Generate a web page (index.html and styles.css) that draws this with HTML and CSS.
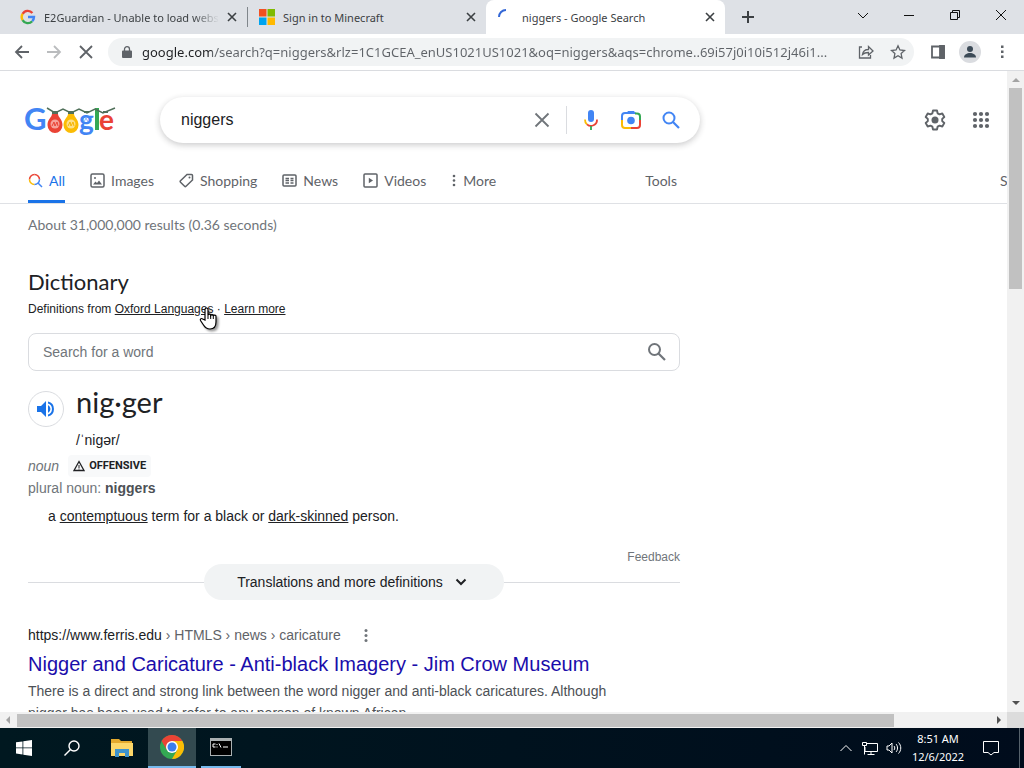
FILE: index.html
```html
<!DOCTYPE html>
<html lang="en">
<head>
  <meta charset="UTF-8">
  <meta name="viewport" content="width=device-width, initial-scale=1.0">
  <title>niggers - Google Search</title>
  <link rel="stylesheet" href="styles.css">
</head>
<body>
  <!-- Browser tabs -->
  <div class="tab-strip">
    <div class="tab">
      <svg class="favicon" viewBox="0 0 16 16" fill="none" stroke-width="2.4">
        <path d="M2.6 4.9A6 6 0 0 1 12.4 4" stroke="#ea4335"/>
        <path d="M2.6 11.1a6 6 0 0 1 0-6.2" stroke="#fbbc05"/>
        <path d="M12.2 12.2a6 6 0 0 1-9.6-1.1" stroke="#34a853"/>
        <path d="M8 8h6a6 6 0 0 1-1.8 4.2" stroke="#4285f4"/>
      </svg>
      <span class="tab-title faded">E2Guardian - Unable to load website</span>
      <button class="tab-close" aria-label="Close tab"><svg viewBox="0 0 10 10"><path d="M1 1l8 8M9 1l-8 8"/></svg></button>
    </div>
    <div class="tab divided">
      <svg class="favicon" viewBox="0 0 16 16">
        <path d="M0 0h7.5v7.5H0z" fill="#f25022"/>
        <path d="M8.5 0H16v7.5H8.5z" fill="#7fba00"/>
        <path d="M0 8.5h7.5V16H0z" fill="#00a4ef"/>
        <path d="M8.5 8.5H16V16H8.5z" fill="#ffb900"/>
      </svg>
      <span class="tab-title">Sign in to Minecraft</span>
      <button class="tab-close" aria-label="Close tab"><svg viewBox="0 0 10 10"><path d="M1 1l8 8M9 1l-8 8"/></svg></button>
    </div>
    <div class="tab active">
      <svg class="favicon" viewBox="0 0 16 16"><path d="M1 8a7 7 0 0 1 7-7" fill="none" stroke="#3367d6" stroke-width="2"/></svg>
      <span class="tab-title">niggers - Google Search</span>
      <button class="tab-close" aria-label="Close tab"><svg viewBox="0 0 10 10"><path d="M1 1l8 8M9 1l-8 8"/></svg></button>
    </div>
    <button class="new-tab" aria-label="New tab"><svg viewBox="0 0 12 12"><path d="M6 0v12M0 6h12"/></svg></button>
    <div class="window-buttons">
      <button aria-label="Search tabs"><svg viewBox="0 0 12 12"><path d="M1 4l5 5 5-5"/></svg></button>
      <button aria-label="Minimize"><svg viewBox="0 0 12 12"><path d="M1 6.5h10"/></svg></button>
      <button aria-label="Restore"><svg viewBox="0 0 12 12"><path d="M1.5 3.5h7v7h-7zM3.5 3.5v-2h7v7h-2"/></svg></button>
      <button aria-label="Close"><svg viewBox="0 0 12 12"><path d="M1 1l10 10M11 1L1 11"/></svg></button>
    </div>
  </div>

  <!-- Toolbar with address bar -->
  <div class="toolbar">
    <button class="tool" aria-label="Back"><svg viewBox="0 0 16 16"><path d="M15 8H2M8 2L2 8l6 6"/></svg></button>
    <button class="tool disabled" aria-label="Forward"><svg viewBox="0 0 16 16"><path d="M1 8h13M8 2l6 6-6 6"/></svg></button>
    <button class="tool" aria-label="Stop"><svg viewBox="0 0 16 16"><path d="M2 2l12 12M14 2L2 14"/></svg></button>
    <div class="address-bar">
      <svg class="lock" viewBox="0 0 10 12"><path d="M1 4.5h8a1 1 0 0 1 1 1V11a1 1 0 0 1-1 1H1a1 1 0 0 1-1-1V5.500a1 1 0 0 1 1-1z" fill="#5f6368"/><path d="M2.500 5V3.200a2.500 2.500 0 0 1 5 0V5" fill="none" stroke="#5f6368" stroke-width="1.300"/></svg>
      <input class="url" type="text" aria-label="Address" value="google.com/search?q=niggers&amp;rlz=1C1GCEA_enUS1021US1021&amp;oq=niggers&amp;aqs=chrome..69i57j0i10i512j46i1...">
      <button class="tool thin" aria-label="Share"><svg viewBox="0 0 16 16"><path d="M4 3H1.500v11h11v-3M4.500 10.500c.5-3.500 2.500-5 6-5V2.500L15 7l-4.500 4V8.500c-2.500 0-4.500.5-6 2z"/></svg></button>
      <button class="tool thin" aria-label="Bookmark"><svg viewBox="0 0 16 16"><path d="M8 1.800l1.900 4.200 4.600.5-3.400 3.100.9 4.500L8 11.800l-4 2.300.9-4.500L1.500 6.500l4.600-.5z"/></svg></button>
    </div>
    <button class="tool" aria-label="Side panel"><svg viewBox="0 0 16 16"><path d="M2 2.500h12v11H2z"/><path d="M10 2h4v12h-4z" fill="#5f6368"/></svg></button>
    <button class="tool avatar" aria-label="Profile"><svg viewBox="0 0 22 22"><circle cx="11" cy="11" r="11" fill="#dadce0" stroke="none"/><circle cx="11" cy="8" r="3" fill="#3c4a57" stroke="none"/><path d="M5 16.500c0-3 3-4.500 6-4.500s6 1.500 6 4.500z" fill="#3c4a57" stroke="none"/></svg></button>
    <button class="tool menu" aria-label="Menu"><svg viewBox="0 0 16 16"><path d="M7 1.500h2.500V4H7zM7 6.500h2.500V9H7zM7 11.500h2.500V14H7z" fill="#5f6368" stroke="none"/></svg></button>
  </div>

  <!-- Page viewport -->
  <div class="viewport">
    <main class="page">
      <header class="search-header">
        <a class="logo" href="#" aria-label="Google">
          <svg viewBox="0 0 92 34">
            <text x="0" y="27" font-size="31" fill="#4285f4">G</text>
            <text x="55" y="27" font-size="28" fill="#4285f4">g</text>
            <path d="M71 5h4v22h-4z" fill="#34a853"/>
            <text x="75" y="27" font-size="28" fill="#ea4335">e</text>
            <path d="M23 5l8 5 8-4 8 4 8-4 8 4 8-4 8 4 12-5" fill="none" stroke="#50705a" stroke-width="1.500"/>
            <path d="M28 11h6c0 3 4.500 5 4.500 11a7.500 8 0 0 1-15 0c0-6 4.500-8 4.500-11z" fill="#ea4335"/>
            <path d="M44 11h6c0 3 4.500 5 4.500 11a7.500 8 0 0 1-15 0c0-6 4.500-8 4.500-11z" fill="#fbbc05"/>
            <path d="M28 8h6v3h-6zM44 8h6v3h-6zM60 8h5v2h-5zM79 8h5v2h-5z" fill="#50705a"/>
            <circle cx="31" cy="21" r="4.500" fill="#f6a39b"/><path d="M28 23l2-4 1 4 2-4 1 4" fill="none" stroke="#ea4335"/>
            <circle cx="47" cy="21" r="4.500" fill="#fde08a"/><path d="M44 23l2-4 1 4 2-4 1 4" fill="none" stroke="#f5b400"/>
            <path d="M60 19l2-4 2 4" fill="none" stroke="#8ab4f8"/>
          </svg>
        </a>
        <form class="search-box">
          <input type="text" aria-label="Search" value="niggers">
          <button type="button" class="clear" aria-label="Clear"><svg viewBox="0 0 16 16"><path d="M1.500 1.500l13 13M14.500 1.500l-13 13" stroke="#70757a" stroke-width="1.800"/></svg></button>
          <button type="button" aria-label="Search by voice"><svg viewBox="0 0 20 20">
            <rect x="7" y="0" width="6" height="12" rx="3" fill="#4285f4"/>
            <path d="M4 9.500a6 6 0 0 0 2 4.800" fill="none" stroke="#fbbc05" stroke-width="1.800"/>
            <path d="M6 14.300a6 6 0 0 0 10-4.800" fill="none" stroke="#ea4335" stroke-width="1.800"/>
            <path d="M10 16v4" stroke="#34a853" stroke-width="1.800"/>
          </svg></button>
          <button type="button" aria-label="Search by image"><svg viewBox="0 0 20 20" fill="none" stroke-width="2">
            <path d="M1 10V6a3 3 0 0 1 3-3h3" stroke="#4285f4"/>
            <path d="M5 3.500l2-2h6l2 2z" fill="#4285f4" stroke="#4285f4" stroke-width="1"/>
            <path d="M14 3.500h2a3 3 0 0 1 3 3V10" stroke="#34a853"/>
            <path d="M19 10v5a3 3 0 0 1-3 3h-6" stroke="#ea4335"/>
            <path d="M10 18H4a3 3 0 0 1-3-3v-5" stroke="#fbbc05"/>
            <circle cx="10" cy="10.500" r="3.800" fill="#4285f4"/>
          </svg></button>
          <button type="button" aria-label="Google Search"><svg viewBox="0 0 20 20"><circle cx="8" cy="8" r="5.500" fill="none" stroke="#4285f4" stroke-width="2"/><path d="M12 12l6 6" stroke="#4285f4" stroke-width="2.200"/></svg></button>
        </form>
        <div class="header-actions">
          <button aria-label="Settings"><svg viewBox="0 0 22 22"><path d="M9 1.500h4l.6 2.800 2 1.100 2.700-.9 2 3.500-2.100 1.900v2.200l2.100 1.900-2 3.500-2.700-.9-2 1.100-.6 2.800H9l-.6-2.800-2-1.100-2.700.9-2-3.500 2.100-1.900V9.900L1.700 8l2-3.500 2.700.9 2-1.100z" fill="none" stroke="#5f6368" stroke-width="1.900" stroke-linejoin="round"/><circle cx="11" cy="11" r="3.500" fill="#5f6368"/></svg></button>
          <button aria-label="Google apps"><svg viewBox="0 0 22 22" fill="#5f6368"><circle cx="5" cy="5" r="2.100"/><circle cx="11" cy="5" r="2.100"/><circle cx="17" cy="5" r="2.100"/><circle cx="5" cy="11" r="2.100"/><circle cx="11" cy="11" r="2.100"/><circle cx="17" cy="11" r="2.100"/><circle cx="5" cy="17" r="2.100"/><circle cx="11" cy="17" r="2.100"/><circle cx="17" cy="17" r="2.100"/></svg></button>
        </div>
      </header>

      <nav class="search-nav">
        <a class="active" href="#"><svg viewBox="0 0 15 15" fill="none" stroke-width="1.500"><path d="M1.500 6.500A5 5 0 0 1 6.500 1.500" stroke="#ea4335"/><path d="M6.500 1.500A5 5 0 0 1 11.500 6.500" stroke="#ea4335"/><path d="M1.500 6.500A5 5 0 0 0 6.500 11.500" stroke="#fbbc05"/><path d="M6.500 11.500A5 5 0 0 0 11.500 6.500M10 10L14 14" stroke="#4285f4"/></svg>All</a>
        <a href="#"><svg viewBox="0 0 15 15" fill="none" stroke="#5f6368" stroke-width="1.500"><rect x="1" y="1" width="13" height="13" rx="1.500"/><path d="M3 11.500h9l-3-4-2 2.500-1.500-1.500z" fill="#5f6368" stroke="none"/><circle cx="5" cy="5" r="1" fill="#5f6368" stroke="none"/></svg>Images</a>
        <a href="#"><svg viewBox="0 0 15 15" fill="none" stroke="#5f6368" stroke-width="1.500"><path d="M8 1.500h4.500a1 1 0 0 1 1 1V7L7 13.300a1 1 0 0 1-1.400 0L1.500 9.200a1 1 0 0 1 0-1.400z"/><circle cx="10.500" cy="4.500" r="1" fill="#5f6368" stroke="none"/></svg>Shopping</a>
        <a href="#"><svg viewBox="0 0 15 15" fill="none" stroke="#5f6368" stroke-width="1.500"><rect x="1" y="2" width="13" height="11" rx="1"/><path d="M3.500 5.500h3.500M3.500 7.500h3.500M3.500 10h3.500M8.500 5.500h3M8.500 7.500h3M8.500 10h3"/></svg>News</a>
        <a href="#"><svg viewBox="0 0 15 15" fill="none" stroke="#5f6368" stroke-width="1.500"><rect x="1" y="1" width="13" height="13" rx="1"/><path d="M5.800 4.800v5.400L10 7.500z" fill="#5f6368" stroke="none"/></svg>Videos</a>
        <button class="more"><svg viewBox="0 0 6 15" fill="#5f6368"><circle cx="3" cy="3" r="1.300"/><circle cx="3" cy="7.500" r="1.300"/><circle cx="3" cy="12" r="1.300"/></svg>More</button>
        <button class="tools">Tools</button>
        <button class="safe-search">SafeSearch</button>
      </nav>

      <section class="results">
        <p class="stats">About 31,000,000 results (0.36 seconds)</p>

        <!-- Dictionary card -->
        <h2>Dictionary</h2>
        <p class="source">Definitions from <a href="#">Oxford Languages</a> · <a href="#">Learn more</a></p>
        <form class="word-search">
          <input type="text" aria-label="Search for a word" placeholder="Search for a word">
          <button type="button" aria-label="Look up"><svg viewBox="0 0 20 20"><circle cx="7.500" cy="7.500" r="5.500" fill="none" stroke="#70757a" stroke-width="2"/><path d="M11.500 11.500l6.500 6.500" stroke="#70757a" stroke-width="2.200"/></svg></button>
        </form>
        <div class="headword">
          <button class="speak" aria-label="Listen"><svg viewBox="0 0 18 18" fill="#1a73e8"><path d="M0 6v6h4l5 5V1L4 6z"/><path d="M11 5v8a4.500 4.500 0 0 0 0-8z"/><path d="M11 1.500v2a5.800 5.800 0 0 1 0 11v2a7.700 7.700 0 0 0 0-15z"/></svg></button>
          <div>
            <h3>nig·ger</h3>
            <p class="phonetic">/ˈnigər/</p>
          </div>
        </div>
        <p class="word-class"><i>noun</i>
          <span class="label"><svg viewBox="0 0 12 12"><path d="M6 1.500l5 9H1z" fill="none" stroke="#202124" stroke-width="1.300"/><path d="M6 5v3M6 8.500v1" stroke="#202124"/></svg>OFFENSIVE</span>
        </p>
        <p class="plural">plural noun: <b>niggers</b></p>
        <p class="definition">a <a href="#">contemptuous</a> term for a black or <a href="#">dark-skinned</a> person.</p>
        <p class="feedback"><a href="#">Feedback</a></p>
        <div class="expand">
          <button>Translations and more definitions <svg viewBox="0 0 12 12"><path d="M1.500 3.500L6 8l4.500-4.500" fill="none" stroke="#202124" stroke-width="2"/></svg></button>
        </div>

        <!-- First result -->
        <article class="result">
          <div class="result-url">
            <cite>https://www.ferris.edu<span> › HTMLS › news › caricature</span></cite>
            <button aria-label="About this result"><svg viewBox="0 0 6 15" fill="#70757a"><circle cx="3" cy="2.500" r="1.500"/><circle cx="3" cy="7.500" r="1.500"/><circle cx="3" cy="12.500" r="1.500"/></svg></button>
          </div>
          <h4><a href="#">Nigger and Caricature - Anti-black Imagery - Jim Crow Museum</a></h4>
          <p>There is a direct and strong link between the word nigger and anti-black caricatures. Although nigger has been used to refer to any person of known African</p>
        </article>
      </section>
      <svg class="cursor" viewBox="0 0 18 24"><path d="M6 13V2.500a1.500 1.500 0 0 1 3 0V8a1.400 1.400 0 0 1 2.700.5A1.400 1.400 0 0 1 14.300 9a1.400 1.400 0 0 1 2.700.7V15c0 4-2 7-6 7-3.500 0-5-1.500-6.500-4L1.500 13.500c-.8-1.800 1-2.500 2.200-1.500z" fill="#fff" stroke="#000" stroke-width="1.200"/><path d="M9 8v4M11.700 8.500V12M14.300 9v3" stroke="#000"/></svg>
    </main>
    <div class="scroll-y"><svg viewBox="0 0 8 4"><path d="M0 4l4-4 4 4z" fill="#a3a3a3"/></svg><div class="thumb"></div><svg viewBox="0 0 8 4"><path d="M0 0l4 4 4-4z" fill="#505050"/></svg></div>
  </div>
  <div class="scroll-x"><svg viewBox="0 0 4 8"><path d="M4 0L0 4l4 4z" fill="#a3a3a3"/></svg><div class="track"><div class="thumb"></div></div><svg viewBox="0 0 4 8"><path d="M0 0l4 4-4 4z" fill="#505050"/></svg><div class="corner"></div></div>

  <!-- Windows taskbar -->
  <footer class="taskbar">
    <button aria-label="Start"><svg viewBox="0 0 16 16" fill="#fff"><path d="M0 2.300l6.500-.9v6.100H0zM7.300 1.300L16 0v7.500H7.300zM0 8.300h6.500v6.200L0 13.600zM7.300 8.300H16V16l-8.700-1.300z"/></svg></button>
    <button aria-label="Search"><svg viewBox="0 0 16 16" fill="none" stroke="#fff" stroke-width="1.400"><circle cx="10" cy="6" r="5"/><path d="M6.500 9.500L.5 15.500"/></svg></button>
    <button class="wide" aria-label="File Explorer"><svg viewBox="0 0 22 20"><path d="M0 1h8l2 2h11v15H0z" fill="#e3a92d"/><path d="M0 5h22v13H0z" fill="#fcd769"/><path d="M4 19v-8h14v8h-4v-4H8v4z" fill="#3e93cc"/></svg></button>
    <button class="current" aria-label="Google Chrome"><svg viewBox="0 0 24 24"><circle cx="12" cy="12" r="12" fill="#34a853"/><path d="M12 12L1.600 6A12 12 0 0 1 22.400 6z" fill="#ea4335"/><path d="M12 6h10.400A12 12 0 0 1 12 24l5.200-9z" fill="#fbbc05"/><path d="M1.600 6l5.200 9L12 6z" fill="#ea4335"/><circle cx="12" cy="12" r="6" fill="#fff"/><circle cx="12" cy="12" r="4.500" fill="#3b7ded"/></svg></button>
    <button class="running" aria-label="Command Prompt"><svg viewBox="0 0 22 18"><path d="M0 0h22v18H0z" fill="#aab0b2"/><path d="M1 3h20v14H1z" fill="#000"/><path d="M5.500 6H3v3h2.500M7 6v1M7 8.500v1M9 5.500l2 4M13 9h5" fill="none" stroke="#fff"/></svg></button>
    <div class="tray">
      <button aria-label="Show hidden icons"><svg viewBox="0 0 16 16"><path d="M2.500 11L8 5.500l5.500 5.500"/></svg></button>
      <button aria-label="Network"><svg viewBox="0 0 16 16"><path d="M4 3.500h11.500v8H3V7M9 11.500v3M5.500 14.500h7M.5 2.500h4v3h-4zM2.500 5.500v9"/></svg></button>
      <button aria-label="Volume"><svg viewBox="0 0 16 16"><path d="M1 6v4h2l3 3V3L3 6zM8 6c1 1 1 3 0 4M10 4c2 2 2 6 0 8M12.500 2.500c3 3 3 8 0 11"/></svg></button>
      <time datetime="2022-12-06T08:51">8:51 AM<br>12/6/2022</time>
      <button class="notify" aria-label="Notifications"><svg viewBox="0 0 16 16"><path d="M.5 1.500h15v11H11L8 15l-3-2.500H.5z"/></svg></button>
    </div>
  </footer>
</body>
</html>
```

FILE: styles.css
```css
* {
  margin: 0;
  padding: 0;
  box-sizing: border-box;
}

body {
  display: flex;
  flex-direction: column;
  height: 100vh;
  overflow: hidden;
  background-color: #fff;
  color: #202124;
  font-family: "Liberation Sans", Arial, sans-serif;
  font-size: 14px;
}

svg {
  display: block;
  flex: none;
}

button, input {
  border: none;
  outline: none;
  background: none;
  color: inherit;
  font: inherit;
}

button {
  display: flex;
  align-items: center;
  justify-content: center;
  flex: none;
}

/* Tab strip */
.tab-strip {
  display: flex;
  flex: none;
  height: 34px;
  padding-left: 8px;
  background-color: #dee1e6;
  font-family: "Noto Sans", sans-serif;
  font-size: 11px;
  color: #3c4043;
}

.tab {
  display: flex;
  align-items: center;
  flex: 0 1 239px;
  min-width: 0;
  gap: 8px;
  padding: 0 10px 0 12px;
}

.tab.active {
  background-color: #fff;
  border-radius: 8px 8px 0 0;
}

.tab.divided {
  background: linear-gradient(#80868b, #80868b) left center / 1px 20px no-repeat;
}

.favicon {
  width: 16px;
  height: 16px;
}

.tab-title {
  flex: 1;
  overflow: hidden;
  white-space: nowrap;
}

.tab-title.faded {
  -webkit-mask-image: linear-gradient(to right, #000 85%, transparent);
  mask-image: linear-gradient(to right, #000 85%, transparent);
}

.tab-close {
  width: 10px;
}

.tab-close svg {
  width: 10px;
  stroke: #3c4043;
  stroke-width: 1.6;
}

.new-tab {
  width: 46px;
}

.new-tab svg {
  width: 12px;
  stroke: #3c4043;
  stroke-width: 2;
}

.window-buttons {
  display: flex;
  margin-left: auto;
}

.window-buttons button {
  width: 46px;
  height: 29px;
}

.window-buttons svg {
  width: 12px;
  fill: none;
  stroke: #111;
}

/* Toolbar */
.toolbar {
  display: flex;
  align-items: center;
  flex: none;
  height: 37px;
  padding: 0 6px;
  border-bottom: 1px solid #dadce0;
}

.tool {
  width: 32px;
}

.tool svg {
  width: 16px;
  fill: none;
  stroke: #5f6368;
  stroke-width: 1.8;
}

.tool.thin svg {
  stroke-width: 1.3;
}

.tool.disabled svg {
  stroke: #babcbe;
}

.tool.avatar svg {
  width: 22px;
}

.address-bar {
  display: flex;
  align-items: center;
  flex: 1;
  min-width: 0;
  height: 28px;
  margin: 0 8px 0 6px;
  padding-left: 14px;
  border-radius: 14px;
  background-color: #f1f3f4;
}

.lock {
  width: 10px;
  margin-right: 10px;
}

/* The host name is darker than the rest of the address */
.url {
  flex: 1;
  min-width: 0;
  font-family: "Noto Sans", sans-serif;
  font-size: 13px;
  color: transparent;
  background: linear-gradient(to right, #202124 70px, #5f6368 70px);
  -webkit-background-clip: text;
  background-clip: text;
}

/* Page */
.viewport {
  display: flex;
  flex: 1;
  min-height: 0;
}

.page {
  position: relative;
  flex: 1;
  min-width: 0;
  overflow: hidden;
}

.search-header {
  display: flex;
  align-items: center;
  padding: 26px 15px 17px 24px;
}

.logo {
  width: 136px;
}

.logo svg {
  width: 92px;
  overflow: visible;
  font-family: Lato, sans-serif;
  font-weight: 700;
}

.search-box {
  display: flex;
  align-items: center;
  flex: 0 1 540px;
  height: 46px;
  padding: 0 9px 0 21px;
  border-radius: 23px;
  box-shadow: 0 2px 6px rgba(32, 33, 36, 0.24);
}

.search-box input {
  flex: 1;
  min-width: 0;
  font-size: 16px;
}

.search-box button {
  width: 40px;
}

.search-box svg {
  width: 20px;
}

.search-box .clear {
  width: 49px;
  height: 28px;
  margin-right: 4px;
  border-right: 1px solid #dadce0;
}

.search-box .clear svg {
  width: 16px;
}

.header-actions {
  display: flex;
  gap: 24px;
  margin-left: auto;
}

.header-actions svg {
  width: 22px;
}

.search-nav {
  display: flex;
  height: 44px;
  padding: 0 0 0 28px;
  border-bottom: 1px solid #dfe1e5;
  gap: 25px;
  font-family: Lato, sans-serif;
  font-size: 14px;
  color: #5f6368;
}

.search-nav a,
.search-nav button {
  display: flex;
  align-items: center;
  flex: none;
  gap: 6px;
  border-bottom: 3px solid transparent;
  color: inherit;
  text-decoration: none;
}

.search-nav svg {
  height: 15px;
}

.search-nav .active {
  border-color: #1a73e8;
  color: #1a73e8;
}

.search-nav .tools {
  margin-left: 124px;
}

.search-nav .safe-search {
  width: 7px;
  min-width: 0;
  justify-content: flex-start;
  margin-left: auto;
}

.results {
  width: 652px;
  margin-left: 28px;
}

.stats {
  line-height: 42px;
  font-family: Lato, sans-serif;
  font-size: 14px;
  color: #70757a;
}

.results h2 {
  margin-top: 20px;
  line-height: 32px;
  font-family: Lato, sans-serif;
  font-size: 22px;
  font-weight: 400;
}

.source {
  margin: 2px 0 15px;
  line-height: 18px;
  font-size: 12px;
}

.source a,
.definition a {
  color: inherit;
}

.word-search {
  display: flex;
  align-items: center;
  height: 38px;
  padding: 0 12px 0 14px;
  border: 1px solid #dadce0;
  border-radius: 8px;
}

.word-search input {
  flex: 1;
}

.word-search input::placeholder {
  color: #70757a;
}

.word-search svg {
  width: 20px;
}

.headword {
  display: flex;
  gap: 12px;
  margin-top: 14px;
}

.speak {
  width: 36px;
  height: 36px;
  margin-top: 6px;
  border: 1px solid #dadce0;
  border-radius: 50%;
}

.speak svg {
  width: 18px;
}

.headword h3 {
  line-height: 34px;
  font-family: Lato, sans-serif;
  font-size: 29px;
  font-weight: 400;
}

.phonetic {
  margin-top: 10px;
  line-height: 22px;
}

.word-class {
  display: flex;
  align-items: center;
  gap: 9px;
  margin-top: 4px;
  line-height: 22px;
  color: #70757a;
}

.label {
  display: flex;
  align-items: center;
  gap: 4px;
  padding: 0 5px;
  border-radius: 4px;
  background-color: #f8f9fa;
  font-family: Roboto, sans-serif;
  font-size: 11px;
  font-weight: 700;
  color: #202124;
}

.label svg {
  width: 12px;
}

.plural {
  line-height: 22px;
  color: #70757a;
}

.plural b {
  color: #4d5156;
}

.definition {
  margin: 6px 0 0 20px;
  line-height: 22px;
}

.feedback {
  margin-top: 23px;
  line-height: 14px;
  font-size: 12px;
  text-align: right;
}

.feedback a {
  color: #70757a;
  text-decoration: none;
}

.expand {
  display: flex;
  align-items: center;
}

.expand::before,
.expand::after {
  content: "";
  flex: 1;
  height: 1px;
  background-color: #dadce0;
}

.expand button {
  gap: 12px;
  width: 300px;
  height: 36px;
  padding-right: 4px;
  border-radius: 18px;
  background-color: #f1f3f4;
}

.expand svg {
  width: 12px;
}

.result {
  margin-top: 24px;
}

.result-url {
  display: flex;
  align-items: center;
  gap: 22px;
  line-height: 22px;
}

.result-url cite {
  font-style: normal;
}

.result-url span {
  color: #5f6368;
}

.result-url svg {
  width: 6px;
}

.result h4 {
  margin-top: 5px;
  line-height: 26px;
  font-size: 20px;
  font-weight: 400;
}

.result h4 a {
  color: #1a0dab;
  text-decoration: none;
}

.result p {
  width: 600px;
  margin-top: 3px;
  line-height: 22px;
  color: #4d5156;
}

.cursor {
  position: absolute;
  left: 199px;
  top: 236px;
  width: 18px;
  filter: drop-shadow(2px 2px 1px rgba(0, 0, 0, 0.4));
}

/* Scrollbars */
.scroll-y {
  display: flex;
  flex-direction: column;
  align-items: center;
  flex: none;
  width: 17px;
  padding: 7px 0;
  background-color: #f1f1f1;
}

.scroll-y svg {
  width: 8px;
}

.scroll-y .thumb {
  width: 13px;
  height: 32%;
  margin: 6px 0 auto;
  background-color: #c1c1c1;
}

.scroll-x {
  display: flex;
  align-items: center;
  flex: none;
  height: 16px;
  padding-left: 6px;
  background-color: #f1f1f1;
}

.scroll-x svg {
  width: 4px;
}

.scroll-x .track {
  flex: 1;
  margin: 0 6px 0 7px;
}

.scroll-x .thumb {
  width: 90%;
  height: 13px;
  background-color: #c1c1c1;
}

.scroll-x .corner {
  width: 17px;
  height: 16px;
  margin-left: 6px;
  background-color: #dcdcdc;
}

/* Taskbar */
.taskbar {
  display: flex;
  flex: none;
  height: 40px;
  background: linear-gradient(to right, #001820, #000c1c);
}

.taskbar button {
  width: 48px;
}

.taskbar svg {
  width: 16px;
}

.taskbar .wide {
  width: 52px;
}

.taskbar .wide svg,
.taskbar .running svg {
  width: 22px;
}

.taskbar .current {
  border-bottom: 2px solid #76b9ed;
  background-color: #334a50;
}

.taskbar .current svg {
  width: 24px;
}

.taskbar .running {
  width: 40px;
  margin-left: 5px;
  border-bottom: 2px solid #76b9ed;
}

.tray {
  display: flex;
  align-items: center;
  margin-left: auto;
  margin-right: 4px;
  border-right: 1px solid #56626c;
  color: #fff;
}

.tray button {
  width: 24px;
}

.tray .notify {
  width: 50px;
  margin-right: 3px;
}

.tray svg {
  fill: none;
  stroke: #fff;
}

.tray time {
  width: 56px;
  margin-left: 4px;
  line-height: 18px;
  font-family: "Noto Sans", sans-serif;
  font-size: 11px;
  text-align: center;
}
```
